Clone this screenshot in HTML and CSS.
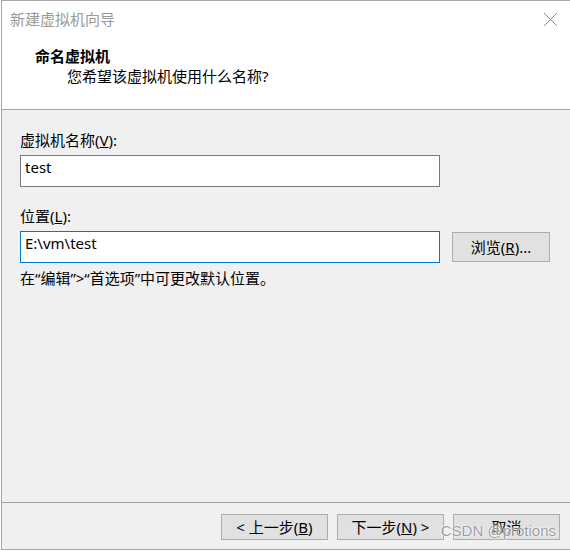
FILE: index.html
```html
<!DOCTYPE html>
<html lang="zh-CN">
<head>
<meta charset="utf-8">
<title>新建虚拟机向导</title>
<link rel="stylesheet" href="styles.css">
</head>
<body>
<div class="window">
  <div class="header">
    <div class="titlebar">
      <span class="title">新建虚拟机向导</span>
      <svg class="close" width="15" height="15" viewBox="0 0 15 15"><path d="M1 1 L14 14 M14 1 L1 14" stroke="#8a8a8a" stroke-width="1" fill="none"/></svg>
    </div>
    <div class="heading">
      <div class="h-main">命名虚拟机</div>
      <div class="h-sub">您希望该虚拟机使用什么名称?</div>
    </div>
  </div>
  <div class="content">
    <div class="label">虚拟机名称(<u>V</u>):</div>
    <div class="field field-name">test</div>
    <div class="label label-loc">位置(<u>L</u>):</div>
    <div class="row">
      <div class="field field-loc">E:\vm\test</div>
      <div class="btn btn-browse">浏览(<u>R</u>)...</div>
    </div>
    <div class="hint">在“编辑”&gt;“首选项”中可更改默认位置。</div>
  </div>
  <div class="footer">
    <div class="btn">&lt; 上一步(<u>B</u>)</div>
    <div class="btn">下一步(<u>N</u>) &gt;</div>
    <div class="btn">取消</div>
  </div>
  <div class="watermark">CSDN @protions</div>
</div>
</body>
</html>
```
FILE: styles.css
```css
html, body {
  margin: 0;
  padding: 0;
  background: #ffffff;
}
body {
  font-family: "Noto Sans", "Noto Sans CJK SC", sans-serif;
  font-size: 15px;
  color: #000;
}
.window {
  position: relative;
  width: 569px;
  height: 550px;
  margin-left: 1px;
  border-top: 1px solid #a8a8a8;
  border-left: 1px solid #a8a8a8;
  border-bottom: 1px solid #a8a8a8;
  box-sizing: border-box;
  display: flex;
  flex-direction: column;
  background: #f0f0f0;
}
.header {
  background: #ffffff;
  height: 108px;
  border-bottom: 1px solid #a0a0a0;
  flex: none;
}
.titlebar {
  height: 36px;
  display: flex;
  align-items: center;
  justify-content: space-between;
  padding: 0 12px 0 8px;
}
.title {
  color: #999999;
  font-size: 15px;
  line-height: 20px;
}
.close {
  display: block;
  margin-top: 1px;
}
.heading {
  padding-top: 9px;
  padding-left: 33px;
}
.h-main {
  font-weight: bold;
  line-height: 20px;
}
.h-sub {
  line-height: 21px;
  padding-left: 32px;
}
.content {
  flex: 1;
  padding: 20px 0 0 18px;
  background: #f0f0f0;
}
.label {
  line-height: 20px;
  margin-bottom: 5px;
}
.label-loc {
  margin-top: 19px;
}
.field {
  box-sizing: border-box;
  width: 420px;
  height: 32px;
  background: #fff;
  border: 1px solid #7a7a7a;
  padding: 0 4px;
  line-height: 22px;
}
.field-loc {
  border-color: #0078d7;
}
.row {
  display: flex;
  align-items: center;
  gap: 12px;
}
.btn {
  box-sizing: border-box;
  background: #e1e1e1;
  border: 1px solid #adadad;
  display: flex;
  align-items: center;
  justify-content: center;
  line-height: 20px;
}
.btn-browse {
  width: 98px;
  height: 30px;
}
.hint {
  margin-top: 5px;
  line-height: 20px;
}
.footer {
  flex: none;
  height: 47px;
  border-top: 1px solid #a0a0a0;
  box-sizing: border-box;
  display: flex;
  justify-content: flex-end;
  align-items: flex-start;
  gap: 9px;
  padding: 11px 10px 0 0;
}
.footer .btn {
  width: 107px;
  height: 26px;
}
.watermark {
  position: absolute;
  right: 14px;
  bottom: 10px;
  font-family: "Liberation Sans", sans-serif;
  font-size: 15px;
  color: rgba(140, 140, 140, 0.85);
  text-shadow: 0 0 2px #ffffff, 0 0 2px #ffffff;
}
```
